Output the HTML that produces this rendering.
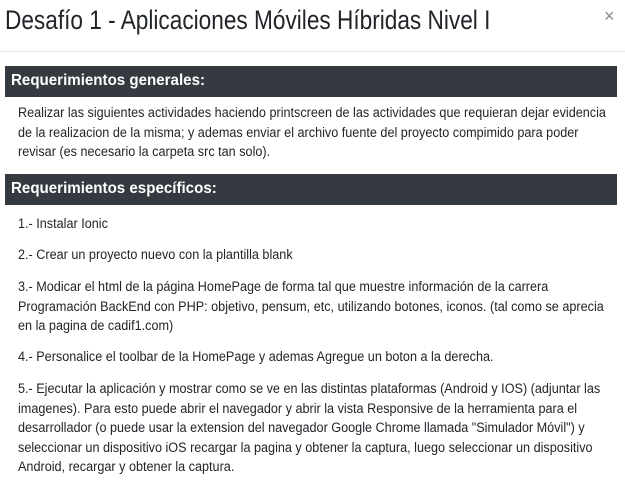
<!DOCTYPE html>
<html><head><meta charset="utf-8"><style>
html,body{margin:0;padding:0;background:#fff;width:625px;height:501px;overflow:hidden;font-family:"Liberation Sans",sans-serif;color:#212529}
.t{position:absolute;white-space:nowrap;transform-origin:0 0}
#title{left:5px;top:2px;font-size:27px;line-height:36px;transform:scaleX(0.838)}
#x{position:absolute;left:604px;top:6px;font-size:18px;color:#888}
#sep{position:absolute;left:0;top:51px;width:625px;height:1px;background:#e6e6e6}
.bar{position:absolute;left:5px;width:612px;height:31px;background:#343a40}
.bar span{position:absolute;left:6px;top:6px;color:#fff;font-weight:bold;font-size:15.5px;white-space:nowrap;transform-origin:0 0;transform:scaleX(0.975)}
.p{position:absolute;left:18px;font-size:13.5px;line-height:19.6px;white-space:nowrap;transform-origin:0 0;transform:scaleX(0.936)}
</style></head><body>
<div class="t" id="title">Desafío 1 - Aplicaciones Móviles Híbridas Nivel I</div>
<div id="x">×</div>
<div id="sep"></div>
<div class="bar" style="top:66px"><span>Requerimientos generales:</span></div>
<div class="p" style="top:103px">Realizar las siguientes actividades haciendo printscreen de las actividades que requieran dejar evidencia<br>de la realizacion de la misma; y ademas enviar el archivo fuente del proyecto compimido para poder<br>revisar (es necesario la carpeta src tan solo).</div>
<div class="bar" style="top:174px"><span>Requerimientos específicos:</span></div>
<div class="p" style="top:214px">1.- Instalar Ionic</div>
<div class="p" style="top:245px">2.- Crear un proyecto nuevo con la plantilla blank</div>
<div class="p" style="top:277px">3.- Modicar el html de la página HomePage de forma tal que muestre información de la carrera<br>Programación BackEnd con PHP: objetivo, pensum, etc, utilizando botones, iconos. (tal como se aprecia<br>en la pagina de cadif1.com)</div>
<div class="p" style="top:347px">4.- Personalice el toolbar de la HomePage y ademas Agregue un boton a la derecha.</div>
<div class="p" style="top:379px">5.- Ejecutar la aplicación y mostrar como se ve en las distintas plataformas (Android y IOS) (adjuntar las<br>imagenes). Para esto puede abrir el navegador y abrir la vista Responsive de la herramienta para el<br>desarrollador (o puede usar la extension del navegador Google Chrome llamada "Simulador Móvil") y<br>seleccionar un dispositivo iOS recargar la pagina y obtener la captura, luego seleccionar un dispositivo<br>Android, recargar y obtener la captura.</div>
</body></html>
